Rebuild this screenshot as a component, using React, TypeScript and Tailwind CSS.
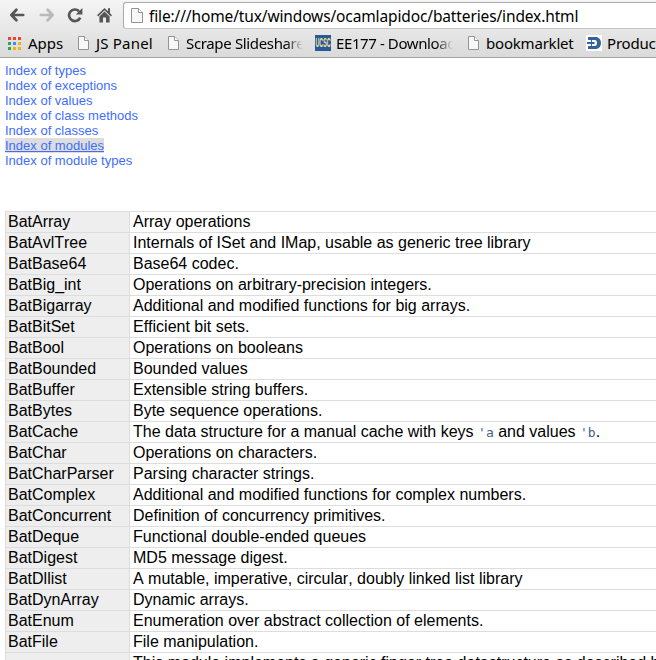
import React from "react";

const links = [
  "Index of types",
  "Index of exceptions",
  "Index of values",
  "Index of class methods",
  "Index of classes",
  "Index of modules",
  "Index of module types",
];

const Code = ({ children }: { children: React.ReactNode }) => (
  <code className="font-['DejaVu_Sans_Mono',monospace] text-[13px] leading-none text-[#465f91]">{children}</code>
);

const modules: [string, React.ReactNode][] = [
  ["BatArray", "Array operations"],
  ["BatAvlTree", "Internals of ISet and IMap, usable as generic tree library"],
  ["BatBase64", "Base64 codec."],
  ["BatBig_int", "Operations on arbitrary-precision integers."],
  ["BatBigarray", "Additional and modified functions for big arrays."],
  ["BatBitSet", "Efficient bit sets."],
  ["BatBool", "Operations on booleans"],
  ["BatBounded", "Bounded values"],
  ["BatBuffer", "Extensible string buffers."],
  ["BatBytes", "Byte sequence operations."],
  [
    "BatCache",
    <>
      The data structure for a manual cache with keys <Code>'a</Code> and values <Code>'b</Code>.
    </>,
  ],
  ["BatChar", "Operations on characters."],
  ["BatCharParser", "Parsing character strings."],
  ["BatComplex", "Additional and modified functions for complex numbers."],
  ["BatConcurrent", "Definition of concurrency primitives."],
  ["BatDeque", "Functional double-ended queues"],
  ["BatDigest", "MD5 message digest."],
  ["BatDllist", "A mutable, imperative, circular, doubly linked list library"],
  ["BatDynArray", "Dynamic arrays."],
  ["BatEnum", "Enumeration over abstract collection of elements."],
  ["BatFile", "File manipulation."],
  ["", "This module implements a generic finger tree datastructure as described by"],
];

const PageIcon = () => (
  <svg width="12" height="15" viewBox="0 0 12 15" className="block shrink-0">
    <path d="M.5.5h6l4 4v9H.5z" fill="#f8f8f8" stroke="#939393" />
    <path d="M6.5.5v4h4" fill="#fff" stroke="#939393" />
  </svg>
);

const LargePageIcon = () => (
  <svg width="12" height="15" viewBox="0 0 12 15" className="block shrink-0">
    <path d="M.5.5h7l4 4v10H.5z" fill="#f8f8f8" stroke="#939393" />
    <path d="M7.5.5v4h4" fill="#fff" stroke="#939393" />
  </svg>
);

const Arrow = ({ color, flip }: { color: string; flip?: boolean }) => (
  <svg width="16" height="14" viewBox="0 0 16 14" className={flip ? "block -scale-x-100" : "block"}>
    <path d="M7.4 1.8 2.4 7l5 5.2M2.6 7h11.6" fill="none" stroke={color} strokeWidth="2.7" strokeLinecap="round" strokeLinejoin="round" />
  </svg>
);

const Reload = () => (
  <svg width="16" height="16" viewBox="0 0 16 16" className="block">
    <path d="M13.2 10.6A5.8 5.8 0 1 1 12 4.2" fill="none" stroke="#565656" strokeWidth="2.7" />
    <path d="M15.4 1v6.6H8.8z" fill="#565656" />
  </svg>
);

const Home = () => (
  <svg width="15" height="16" viewBox="0 0 15 16" className="block">
    <path d="M7.5.9 0 8.2l1.2 1.2L7.5 3.3l6.3 6.1L15 8.2l-2-2V1.2h-2v3z" fill="#565656" />
    <path d="M2.4 9.4 7.5 4.4l5.1 5V15.4H9v-5H6v5H2.4z" fill="#565656" />
  </svg>
);

const appColors = [
  "#ee4035", "#ee4035", "#ee4035",
  "#2fa35b", "#438af5", "#f4b400",
  "#2fa35b", "#f4b400", "#f4b400",
];

const AppsIcon = () => (
  <svg width="13" height="13" viewBox="0 0 13 13" className="block shrink-0">
    {appColors.map((c, i) => (
      <rect key={i} x={(i % 3) * 5} y={Math.floor(i / 3) * 5} width="3" height="3" fill={c} />
    ))}
  </svg>
);

const ui = "font-['Noto_Sans',sans-serif] whitespace-nowrap text-black";

export default function App() {
  return (
    <div className="flex h-[660px] w-[656px] flex-col overflow-hidden bg-white font-['Liberation_Sans',Arial,sans-serif] text-black">
      <header className="h-[58px] shrink-0 border-b border-[#a3a3a3] bg-linear-to-b from-[#f5f5f5] to-[#dadada]">
        <div className="flex h-[29px] pt-[2px]">
          <div className="w-[29px] pt-[6px] pl-[9px]"><Arrow color="#565656" /></div>
          <div className="w-[38px] pt-[6px] pl-[10px]"><Arrow color="#b9b9b9" flip /></div>
          <div className="w-[30px] pt-[5px]"><Reload /></div>
          <div className="w-[26px] pt-[5px]"><Home /></div>
          <div className="flex h-[27px] flex-1 items-center overflow-hidden rounded-l-[3px] border border-r-0 border-[#a9a9a9] border-b-[#c4c4c4] bg-white pl-[7px]">
            <LargePageIcon />
            <span className={`${ui} ml-[6px] text-[15.5px] leading-[24px] tracking-[-0.13px]`}>
              file:///home/tux/windows/ocamlapidoc/batteries/index.html
            </span>
          </div>
        </div>
        <nav className="flex h-[28px] items-center overflow-hidden pl-[8px] text-[15px] leading-[20px] tracking-[-0.2px]">
          <AppsIcon />
          <span className={`${ui} ml-[7px] w-[50px] shrink-0 tracking-normal`}>Apps</span>
          <PageIcon />
          <span className={`${ui} ml-[6px] w-[72px] shrink-0 tracking-[0.2px]`}>JS Panel</span>
          <PageIcon />
          <span className={`${ui} ml-[6px] w-[117px] shrink-0 overflow-hidden mask-r-from-85% mask-r-to-100% tracking-[-0.35px]`}>Scrape Slideshare</span>
          <svg width="16" height="16" viewBox="0 0 16 16" className="ml-[12px] block shrink-0">
            <rect width="16" height="16" fill="#2a5a95" />
            <text x="0.5" y="12.2" fontFamily="Liberation Sans" fontWeight="bold" fontSize="12" letterSpacing="0" textLength="15" lengthAdjust="spacingAndGlyphs" fill="#f1e6a0">UCSC</text>
          </svg>
          <span className={`${ui} ml-[5px] w-[117px] shrink-0 overflow-hidden mask-r-from-85% mask-r-to-100% tracking-[-0.4px]`}>EE177 - Download</span>
          <div className="ml-[15px] shrink-0"><PageIcon /></div>
          <span className={`${ui} ml-[6px] w-[100px] shrink-0`}>bookmarklet</span>
          <svg width="16" height="16" viewBox="0 0 16 16" className="block shrink-0">
            <rect width="16" height="16" fill="#fff" />
            <path d="M2 2h7.5c3.4 0 5.5 2.6 5.5 6s-2.1 6-5.5 6H2v-3h3V9H1V7h4V5H2z" fill="#356399" />
            <path d="M6 5h2.5C10.2 5 11 6.2 11 8s-.8 3-2.5 3H6V9h2.5V7H6z" fill="#fff" />
          </svg>
          <span className={`${ui} ml-[5px] shrink-0`}>Products</span>
        </nav>
      </header>

      <ul className="mt-[5px] h-[105px] shrink-0 pl-[5px] text-[13px] leading-[15px] text-[#416dff]">
        {links.map((l) => (
          <li key={l} className="h-[15px]">
            <a className={l === "Index of modules" ? "inline-block h-[15px] bg-[#dddddd] underline" : ""}>{l}</a>
          </li>
        ))}
      </ul>

      <div className="mt-[43px] ml-[5px] flex w-[720px] shrink-0 flex-col border-l border-[#dddddd] text-[16px] leading-[20px] [font-kerning:none]">
        {modules.map(([name, text]) => (
          <div key={name} className="flex h-[21px] border-t border-[#dddddd]">
            <div className="w-[124px] shrink-0 border-r border-[#dddddd] bg-[#eeeeee] pl-[2px]">{name}</div>
            <div className="pl-[3px] whitespace-nowrap">{text}</div>
          </div>
        ))}
      </div>
    </div>
  );
}
